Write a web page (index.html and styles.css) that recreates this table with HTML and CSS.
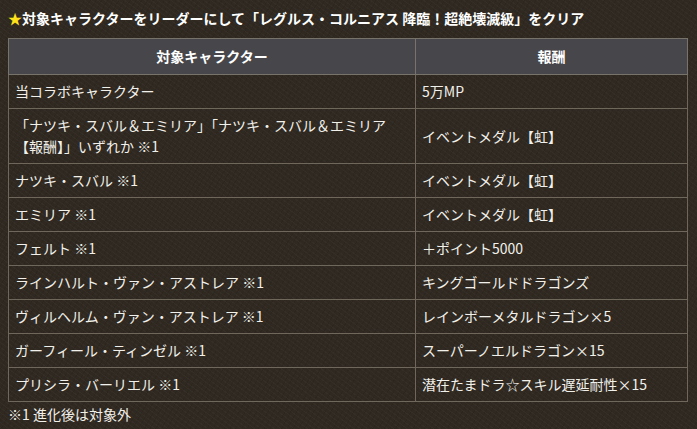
FILE: index.html
```html
<!DOCTYPE html>
<html lang="ja">
<head>
<meta charset="utf-8">
<link rel="stylesheet" href="styles.css">
</head>
<body>
<p class="title"><span class="star">★</span>対象キャラクターをリーダーにして「レグルス・コルニアス 降臨！超絶壊滅級」をクリア</p>
<table class="rewards">
  <thead>
    <tr><th class="col-char">対象キャラクター</th><th>報酬</th></tr>
  </thead>
  <tbody>
    <tr><td>当コラボキャラクター</td><td>5万MP</td></tr>
    <tr><td>「ナツキ・スバル＆エミリア」「ナツキ・スバル＆エミリア<br>【報酬】」いずれか ※1</td><td>イベントメダル【虹】</td></tr>
    <tr><td>ナツキ・スバル ※1</td><td>イベントメダル【虹】</td></tr>
    <tr><td>エミリア ※1</td><td>イベントメダル【虹】</td></tr>
    <tr><td>フェルト ※1</td><td>＋ポイント5000</td></tr>
    <tr><td>ラインハルト・ヴァン・アストレア ※1</td><td>キングゴールドドラゴンズ</td></tr>
    <tr><td>ヴィルヘルム・ヴァン・アストレア ※1</td><td>レインボーメタルドラゴン×5</td></tr>
    <tr><td>ガーフィール・ティンゼル ※1</td><td>スーパーノエルドラゴン×15</td></tr>
    <tr><td>プリシラ・バーリエル ※1</td><td>潜在たまドラ☆スキル遅延耐性×15</td></tr>
  </tbody>
</table>
<p class="note">※1 進化後は対象外</p>
</body>
</html>
```
FILE: styles.css
```css
html, body {
  margin: 0;
  padding: 0;
}
body {
  padding: 8px;
  background-color: #2f2921;
  background-image:
    repeating-linear-gradient(37deg, rgba(255,255,255,0.025) 0 1px, transparent 1px 4px),
    repeating-linear-gradient(-61deg, rgba(0,0,0,0.07) 0 1px, transparent 1px 5px);
  color: #f2f0ea;
  font-family: "Noto Sans CJK JP", "Noto Sans", sans-serif;
  font-size: 14px;
  line-height: 21px;
  min-height: 429px;
  box-sizing: border-box;
}
.title {
  margin: 0 0 9px;
  font-weight: bold;
  font-size: 14px;
  color: #ffffff;
}
.star {
  color: #ffe21a;
}
.rewards {
  width: 680px;
  border-collapse: collapse;
  border: 1px solid #6f675b;
}
.rewards th,
.rewards td {
  border: 1px solid #6f675b;
  text-align: left;
  vertical-align: middle;
}
.rewards th {
  background: #47474b;
  color: #ffffff;
  font-weight: bold;
  text-align: center;
  padding: 7px 6px;
  border-color: #77736b;
}
.rewards td {
  padding: 6px 6px;
}
.col-char {
  width: 394px;
}
.note {
  margin: 2px 0 0;
}
```
